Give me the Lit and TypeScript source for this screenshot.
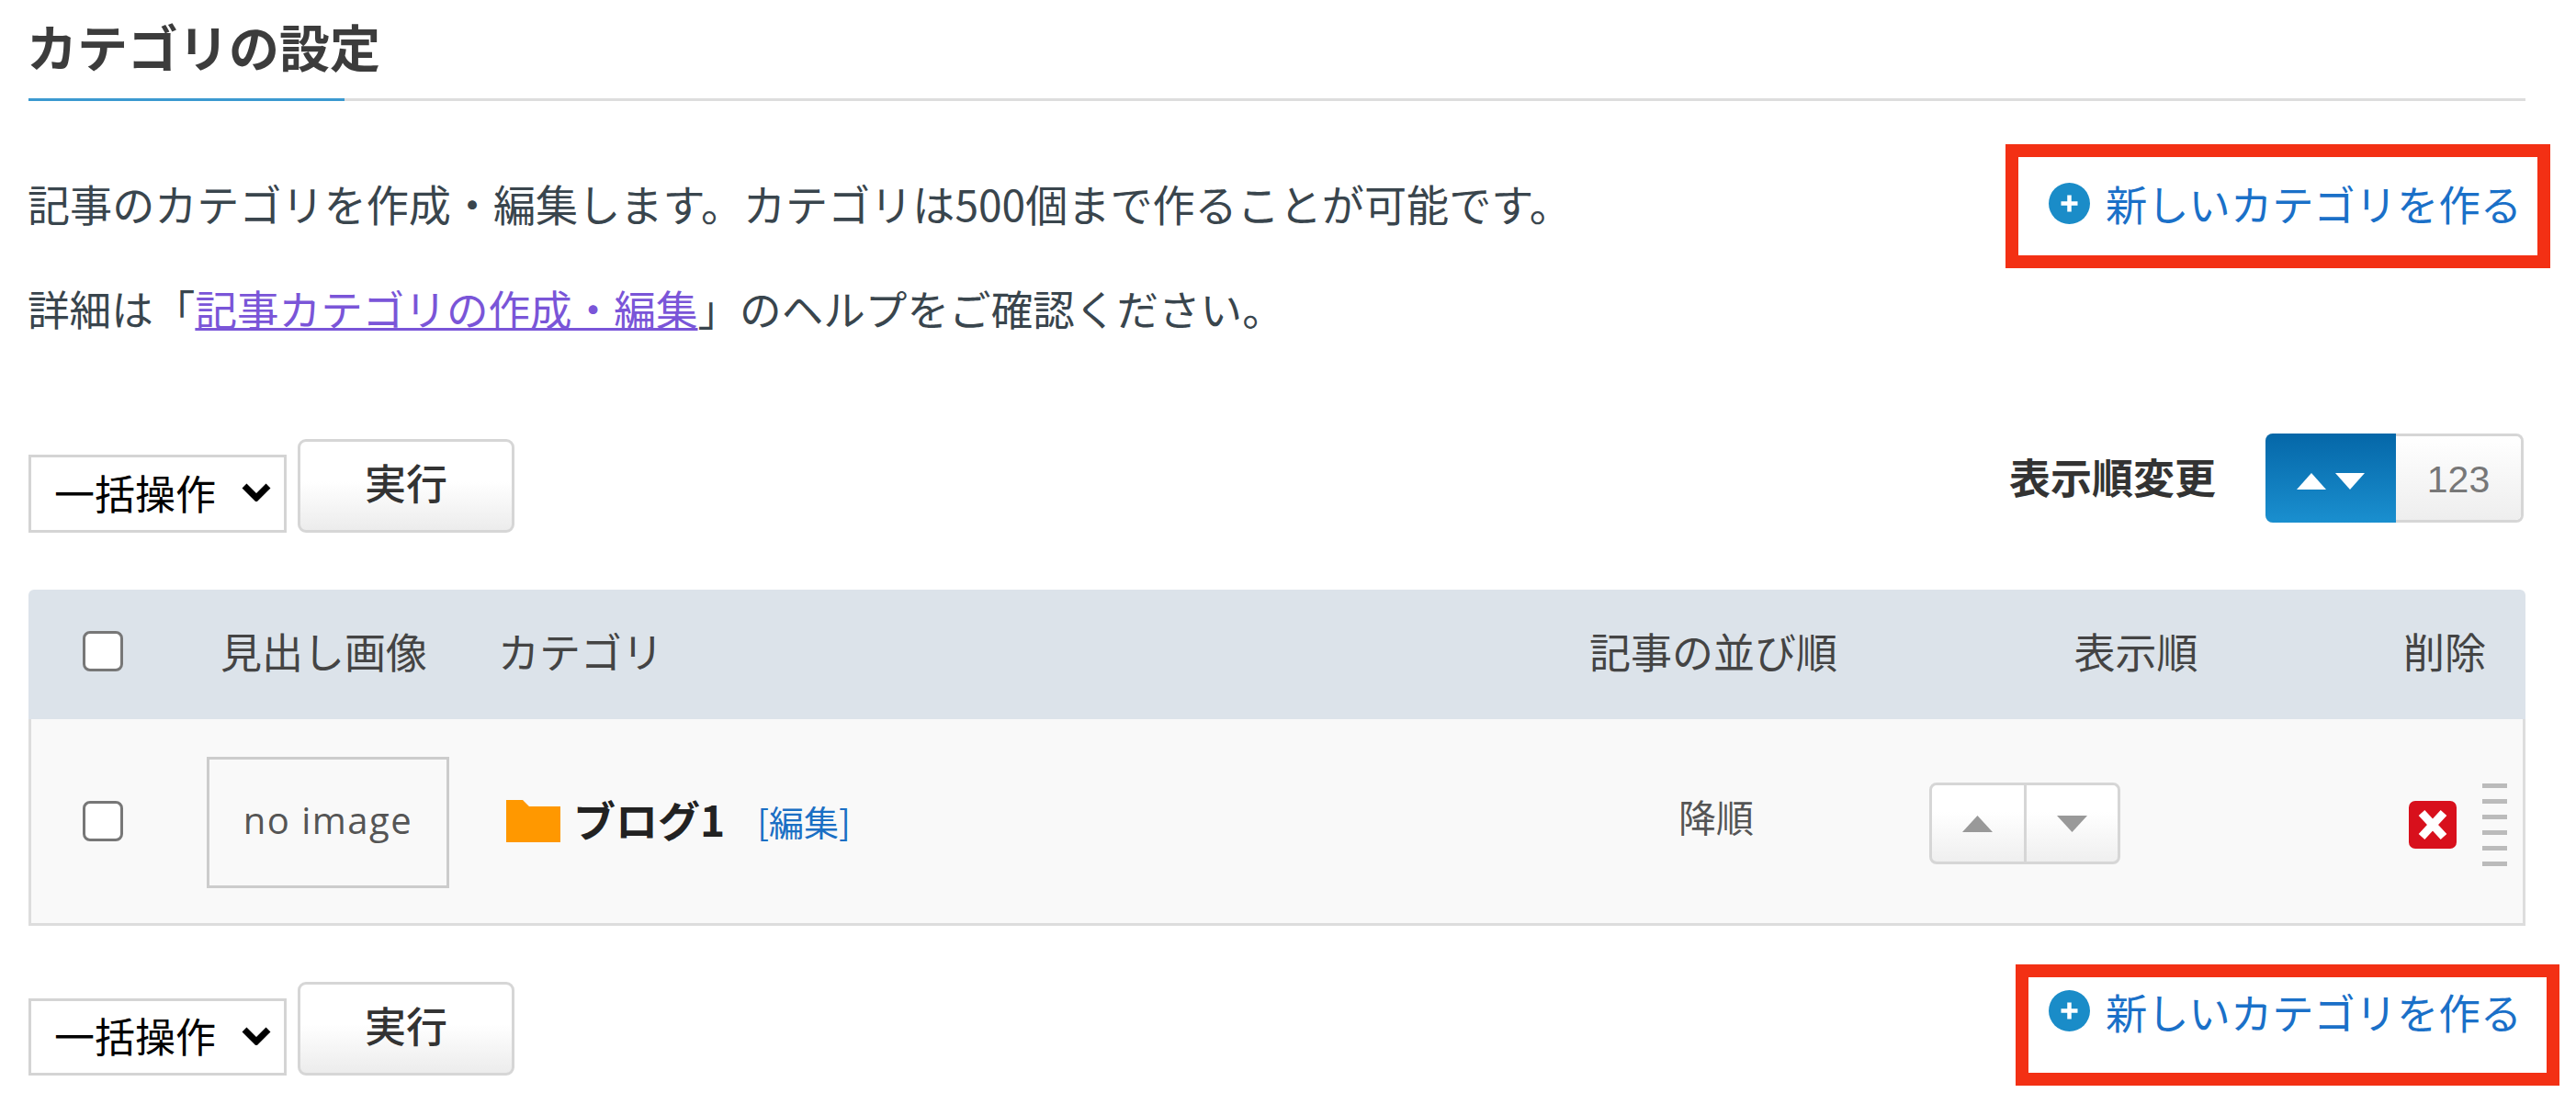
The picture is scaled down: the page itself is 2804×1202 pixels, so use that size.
import { LitElement, html, css } from "lit";
import { customElement } from "lit/decorators.js";

const plusIcon = html`<svg class="plus" viewBox="0 0 45 45" aria-hidden="true">
  <circle cx="22.5" cy="22.5" r="22.5" fill="#1a8cc8"></circle>
  <path d="M22.5 13.5v18M13.5 22.5h18" stroke="#fff" stroke-width="4.5" fill="none"></path>
</svg>`;

const chevron = html`<svg class="chev" viewBox="0 0 32 20" aria-hidden="true">
  <path d="M3 3l13 13L29 3" stroke="#000" stroke-width="7" fill="none"></path>
</svg>`;

@customElement("app-root")
export class AppRoot extends LitElement {
  static styles = css`
    :host {
      display: block;
      width: 2804px;
      height: 1202px;
      background: #fff;
      font-family: "Noto Sans CJK JP", "Liberation Sans", sans-serif;
      color: #333;
      overflow: hidden;
    }
    .page {
      box-sizing: border-box;
      width: 2718px;
      margin-left: 31px;
    }
    .title {
      position: relative;
      margin: 0;
      height: 110px;
      box-sizing: border-box;
      border-bottom: 3px solid #ddd;
      font-size: 55px;
      line-height: 98px;
      font-weight: 700;
      color: #3c3c3c;
      text-indent: -2px;
    }
    .title::after {
      content: "";
      position: absolute;
      left: 0;
      bottom: -3px;
      width: 344px;
      height: 3px;
      background: #3b99d0;
    }
    .intro {
      display: flex;
      justify-content: space-between;
      align-items: flex-start;
      margin: 54px 4px 0 -1px;
    }
    .intro p {
      margin: 0;
      font-size: 45.6px;
      line-height: 114px;
      color: #39454d;
    }
    .intro p.lead {
      font-size: 46.1px;
    }
    .intro p a {
      color: #7a55d8;
      text-decoration: underline;
      text-decoration-thickness: 3px;
    }
    .new {
      position: relative;
      display: flex;
      align-items: center;
      gap: 17px;
      font-size: 45.3px;
      color: #1a70c8;
      text-decoration: none;
      white-space: nowrap;
    }
    .new.top {
      line-height: 114px;
    }
    .new.bottom {
      line-height: 64px;
    }
    .new::after {
      content: "";
      position: absolute;
      box-sizing: border-box;
      border: 14px solid #f33014;
    }
    .new.top::after {
      top: -7px;
      height: 135px;
      left: -47px;
      right: -31px;
    }
    .new.bottom::after {
      top: -19px;
      height: 132px;
      left: -36px;
      right: -41px;
    }
    .plus {
      width: 45px;
      height: 45px;
      flex: none;
    }
    .new.bottom .plus {
      margin-bottom: 2px;
    }
    .tools {
      display: flex;
      justify-content: space-between;
      align-items: flex-start;
      height: 108px;
      margin-top: 80px;
    }
    .bulk {
      display: flex;
      align-items: flex-end;
      gap: 12px;
      margin-top: 6px;
    }
    .sel {
      position: relative;
      width: 281px;
      height: 85px;
    }
    .sel select {
      appearance: none;
      box-sizing: border-box;
      width: 100%;
      height: 100%;
      margin: 0;
      padding: 0 0 4px 25px;
      border: 3px solid #d4d4d4;
      border-radius: 0;
      background: #fff;
      color: #000;
      font: 400 44px "Noto Sans CJK JP", sans-serif;
    }
    .chev {
      position: absolute;
      right: 17px;
      top: 31px;
      width: 32px;
      height: 20px;
      pointer-events: none;
    }
    .run {
      box-sizing: border-box;
      width: 236px;
      height: 102px;
      padding: 0 0 9px;
      border: 3px solid #d6d6d6;
      border-radius: 9px;
      background: linear-gradient(#fff 45%, #ececec);
      color: #333;
      font: 500 45px "Noto Sans CJK JP", sans-serif;
    }
    .order {
      display: flex;
      align-items: flex-start;
      gap: 54px;
      margin-right: 2px;
    }
    .order b {
      font-size: 45px;
      font-weight: 700;
      line-height: 94px;
      color: #333;
    }
    .toggle {
      display: flex;
      width: 281px;
      height: 97px;
      box-sizing: border-box;
      border-radius: 8px;
      overflow: hidden;
      box-shadow: inset 0 0 0 3px #d6d6d6;
    }
    .toggle .on {
      display: flex;
      align-items: center;
      justify-content: center;
      gap: 10px;
      width: 142px;
      padding-top: 6px;
      box-sizing: border-box;
      background: linear-gradient(#0567a8, #1a8fcf);
    }
    .toggle .on svg {
      width: 32px;
      height: 18px;
    }
    .toggle .off {
      flex: 1;
      text-align: center;
      font: 400 41px/94px "Liberation Sans", sans-serif;
      color: #777;
      background: linear-gradient(#fff, #eee);
      margin: 3px 3px 3px 0;
      border-radius: 0 6px 6px 0;
    }
    .table {
      margin-top: 62px;
    }
    .row {
      display: grid;
      grid-template-columns: 191px 320px 1098px 450px 470px 1fr;
      align-items: center;
    }
    .head {
      height: 141px;
      box-sizing: border-box;
      padding-bottom: 8px;
      background: #dce3ea;
      border-radius: 6px 6px 0 0;
      font-size: 45px;
      color: #444;
    }
    .body {
      height: 225px;
      box-sizing: border-box;
      background: #f9f9f9;
      border: solid #ddd;
      border-width: 0 3px 3px 3px;
    }
    .head .ck {
      padding-left: 59px;
      line-height: 0;
    }
    .body .ck {
      padding-left: 56px;
      line-height: 0;
    }
    input[type="checkbox"] {
      appearance: none;
      width: 44px;
      height: 44px;
      margin: 0;
      box-sizing: border-box;
      border: 3px solid #777;
      border-radius: 8px;
      background: #fff;
    }
    .thumb-h {
      padding-left: 18px;
    }
    .center {
      text-align: center;
    }
    .del-h {
      padding-left: 56px;
    }
    .thumb {
      box-sizing: border-box;
      width: 264px;
      height: 143px;
      margin-top: 2px;
      border: 3px solid #ccc;
      display: flex;
      align-items: center;
      justify-content: center;
      font: 400 40px "Open Sans", sans-serif;
      letter-spacing: 1.5px;
      color: #555;
      padding-bottom: 6px;
    }
    .cat {
      display: flex;
      align-items: center;
    }
    .folder {
      width: 59px;
      height: 46px;
      margin: 0 14px 0 6px;
      flex: none;
    }
    .name {
      font-size: 46px;
      font-weight: 700;
      color: #222;
      line-height: 1;
      margin-bottom: 6px;
    }
    .edit {
      margin-left: 35px;
      font-size: 38px;
      line-height: 1;
      color: #1a6fc4;
      text-decoration: none;
    }
    .desc {
      text-align: center;
      font-size: 41px;
      color: #555;
      padding-bottom: 12px;
    }
    .updown {
      display: flex;
      width: 208px;
      height: 89px;
      margin: 5px 0 0 7px;
      box-sizing: border-box;
      border: 3px solid #d6d6d6;
      border-radius: 8px;
      background: linear-gradient(#fff 35%, #efefef);
    }
    .updown button {
      flex: 1;
      margin: 0;
      padding: 0;
      border: 0;
      background: none;
      display: flex;
      align-items: center;
      justify-content: center;
    }
    .updown button + button {
      border-left: 3px solid #d6d6d6;
    }
    .updown svg {
      width: 33px;
      height: 18px;
    }
    .del {
      display: flex;
      align-items: center;
      padding: 8px 0 0 59px;
      gap: 28px;
    }
    .x {
      width: 52px;
      height: 52px;
      flex: none;
    }
    .handle {
      display: flex;
      flex-direction: column;
      gap: 12px;
      width: 27px;
      flex: none;
    }
    .handle i {
      display: block;
      height: 5px;
      background: #bbb;
    }
    .tools.end {
      margin-top: 61px;
      height: auto;
    }
    .tools.end .bulk {
      margin-top: 0;
    }
    .tools.end .sel {
      height: 84px;
    }
    .tools.end .new {
      margin-right: 4px;
    }
  `;

  private bulk() {
    return html`<div class="bulk">
      <div class="sel">
        <select aria-label="一括操作"><option>一括操作</option></select>
        ${chevron}
      </div>
      <button class="run">実行</button>
    </div>`;
  }

  render() {
    return html`<div class="page">
      <h1 class="title">カテゴリの設定</h1>

      <div class="intro">
        <div>
          <p class="lead">記事のカテゴリを作成・編集します。カテゴリは500個まで作ることが可能です。</p>
          <p>詳細は「<a href="#">記事カテゴリの作成・編集</a>」のヘルプをご確認ください。</p>
        </div>
        <a class="new top" href="#">${plusIcon}<span>新しいカテゴリを作る</span></a>
      </div>

      <div class="tools">
        ${this.bulk()}
        <div class="order">
          <b>表示順変更</b>
          <div class="toggle">
            <div class="on">
              <svg viewBox="0 0 32 18"><path d="M16 0l16 18H0z" fill="#fff"></path></svg>
              <svg viewBox="0 0 32 18"><path d="M0 0h32L16 18z" fill="#fff"></path></svg>
            </div>
            <div class="off">123</div>
          </div>
        </div>
      </div>

      <div class="table">
        <div class="row head">
          <div class="ck"><input type="checkbox" aria-label="全選択" /></div>
          <div class="thumb-h">見出し画像</div>
          <div>カテゴリ</div>
          <div class="center">記事の並び順</div>
          <div class="center">表示順</div>
          <div class="del-h">削除</div>
        </div>
        <div class="row body">
          <div class="ck"><input type="checkbox" aria-label="選択" /></div>
          <div><div class="thumb">no image</div></div>
          <div class="cat">
            <svg class="folder" viewBox="0 0 59 46"><path d="M0 0h18l7 7h34v39H0z" fill="#ff9800"></path></svg>
            <span class="name">ブログ1</span>
            <a class="edit" href="#">[編集]</a>
          </div>
          <div class="desc">降順</div>
          <div>
            <div class="updown">
              <button aria-label="上へ"><svg viewBox="0 0 33 18"><path d="M16.5 0L33 18H0z" fill="#999"></path></svg></button>
              <button aria-label="下へ"><svg viewBox="0 0 33 18"><path d="M0 0h33L16.5 18z" fill="#999"></path></svg></button>
            </div>
          </div>
          <div class="del">
            <svg class="x" viewBox="0 0 52 52">
              <rect width="52" height="52" rx="7" fill="#d8101c"></rect>
              <path d="M14 13l24 26M38 13L14 39" stroke="#fff" stroke-width="9" fill="none"></path>
            </svg>
            <div class="handle"><i></i><i></i><i></i><i></i><i></i><i></i></div>
          </div>
        </div>
      </div>

      <div class="tools end">
        ${this.bulk()}
        <a class="new bottom" href="#">${plusIcon}<span>新しいカテゴリを作る</span></a>
      </div>
    </div>`;
  }
}
